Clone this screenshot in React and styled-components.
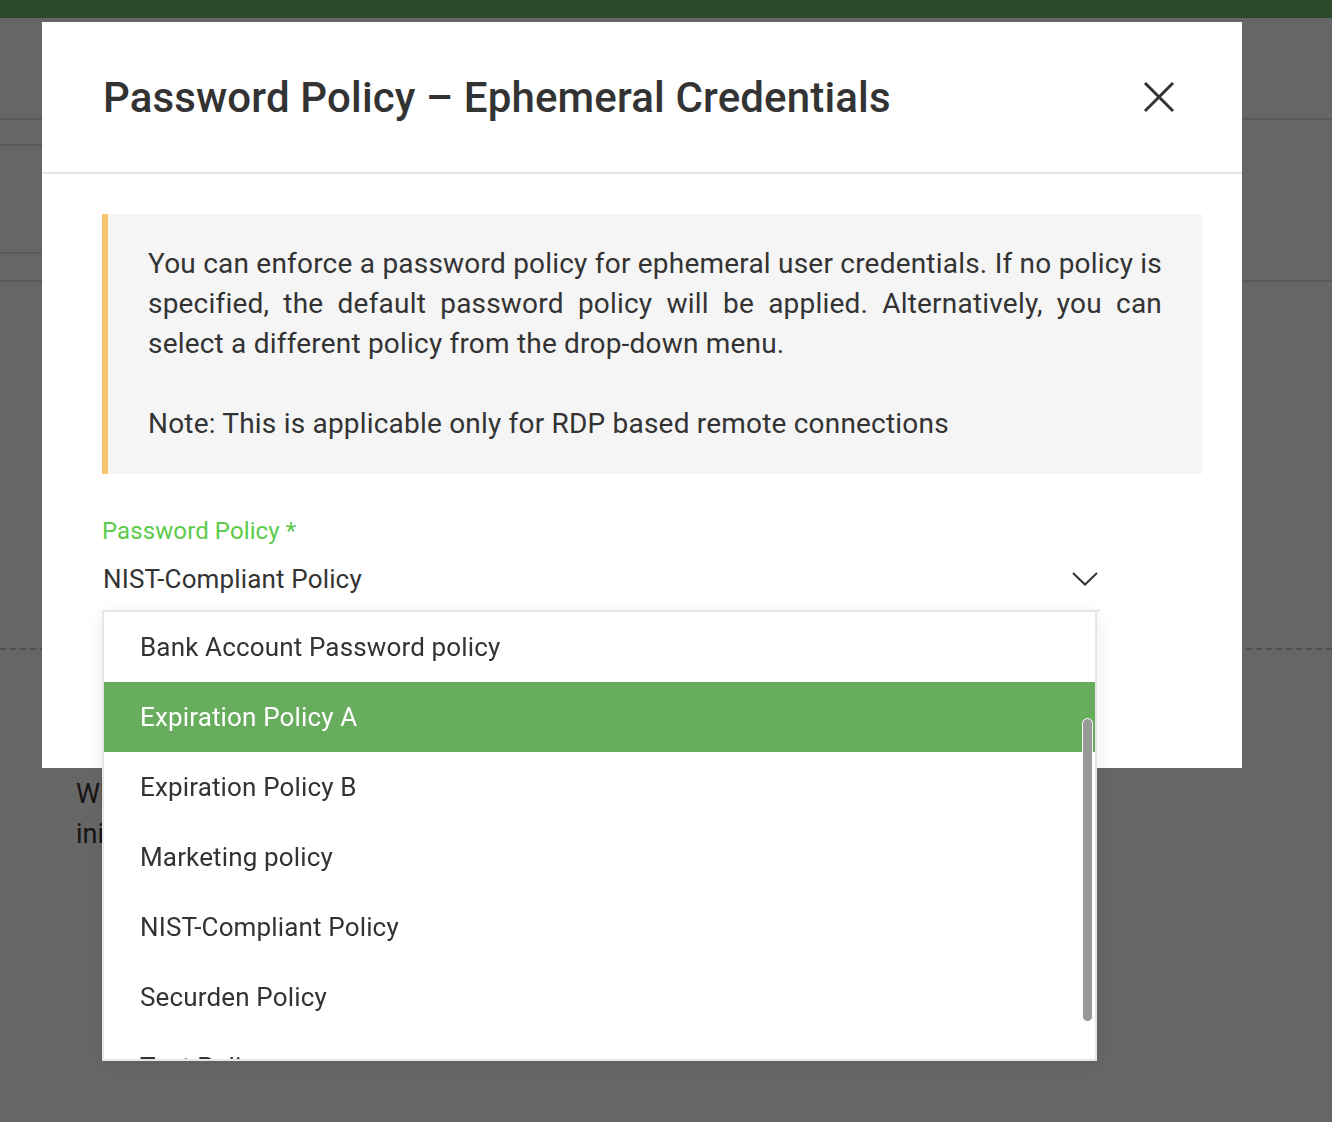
import React from 'react';
import styled, { createGlobalStyle } from 'styled-components';

const GlobalStyle = createGlobalStyle`
  html, body {
    margin: 0;
    padding: 0;
  }
  body {
    font-family: Roboto, "Liberation Sans", Arial, sans-serif;
    color: #333;
  }
`;

const Page = styled.div`
  position: relative;
  height: 1122px;
  background: #ffffff;
  overflow: hidden;
`;

const TopBar = styled.div`
  height: 18px;
  background: #6db96c;
`;

const Toolbar = styled.div`
  height: 100px;
  border-bottom: 2px solid #e2e2e2;
`;

const Section = styled.div`
  height: 160px;
  border-bottom: 2px solid #e2e2e2;
  display: flex;
`;

const SideBlock = styled.div`
  width: 60px;
  margin-top: 24px;
  height: 106px;
  border-top: 2px solid #e2e2e2;
  border-bottom: 2px solid #e2e2e2;
`;

const DashedRule = styled.div`
  margin-top: 366px;
  border-top: 2px dashed #c8c8c8;
`;

const BackText = styled.p`
  margin: 124px 0 0 76px;
  font-size: 27px;
  line-height: 40px;
  color: #333;
`;

const Overlay = styled.div`
  position: fixed;
  inset: 0;
  background: rgba(0, 0, 0, 0.6);
  display: flex;
  align-items: flex-start;
  padding: 22px 0 0 42px;
`;

const Modal = styled.div`
  width: 1200px;
  height: 746px;
  background: #ffffff;
  display: flex;
  flex-direction: column;
`;

const Header = styled.div`
  height: 152px;
  border-bottom: 2px solid #e4e4e4;
  display: flex;
  align-items: center;
  justify-content: space-between;
  padding: 0 66px 0 61px;
  box-sizing: border-box;
`;

const Title = styled.h2`
  margin: 0;
  font-size: 42px;
  font-weight: 500;
  color: #333;
  letter-spacing: 0.15px;
`;

const CloseButton = styled.button`
  border: none;
  background: none;
  padding: 0;
  width: 34px;
  height: 34px;
  display: flex;
  align-items: center;
  justify-content: center;
  cursor: pointer;
`;

const Body = styled.div`
  padding: 40px 40px 0 60px;
`;

const Note = styled.div`
  background: #f5f5f5;
  border-left: 6px solid #f6c46a;
  padding: 30px 40px;
  font-size: 28px;
  line-height: 40px;
  letter-spacing: 0.2px;
  color: #333;
  text-align: justify;
`;

const NoteLine = styled.p`
  margin: 0;
  & + & {
    margin-top: 40px;
  }
`;

const Field = styled.div`
  position: relative;
  margin-top: 43px;
  width: 998px;
`;

const Label = styled.div`
  font-size: 24px;
  line-height: 28px;
  letter-spacing: 0.1px;
  color: #5ccb4b;
`;

const SelectRow = styled.div`
  display: flex;
  align-items: center;
  justify-content: space-between;
  margin-top: 4px;
  height: 62px;
  padding: 0 2px 2px 1px;
  box-sizing: border-box;
  border-bottom: 1px solid #e0e0e0;
  font-size: 26px;
  letter-spacing: 0.15px;
  color: #333;
`;

const Menu = styled.div`
  position: absolute;
  top: 93px;
  left: 0;
  width: 995px;
  height: 451px;
  box-sizing: border-box;
  border: 2px solid #e6e6e6;
  background: #ffffff;
  box-shadow: 0 4px 18px rgba(0, 0, 0, 0.08);
  overflow: hidden;
`;

const Option = styled.div`
  height: 70px;
  display: flex;
  align-items: center;
  padding-left: 36px;
  font-size: 26px;
  letter-spacing: 0.15px;
  color: ${p => (p.$active ? '#ffffff' : '#333')};
  background: ${p => (p.$active ? '#68ad5d' : 'transparent')};
`;

const Thumb = styled.div`
  position: absolute;
  top: 106px;
  right: 2px;
  width: 11px;
  height: 304px;
  box-sizing: border-box;
  background: #999;
  border: 1px solid #ffffff;
  border-radius: 6px;
`;

const options = [
  'Bank Account Password policy',
  'Expiration Policy A',
  'Expiration Policy B',
  'Marketing policy',
  'NIST-Compliant Policy',
  'Securden Policy',
  'Test Policy',
];

export default function App() {
  return (
    <>
      <GlobalStyle />
      <Page>
        <TopBar />
        <Toolbar />
        <Section>
          <SideBlock />
        </Section>
        <DashedRule />
        <BackText>
          When enabled, a new account is
          <br />
          initialized for each session.
        </BackText>
      </Page>
      <Overlay>
        <Modal>
          <Header>
            <Title>Password Policy – Ephemeral Credentials</Title>
            <CloseButton aria-label="Close">
              <svg width="32" height="32" viewBox="0 0 32 32">
                <path d="M2 2 L30 30 M30 2 L2 30" stroke="#333" strokeWidth="3" fill="none" />
              </svg>
            </CloseButton>
          </Header>
          <Body>
            <Note>
              <NoteLine>
                You can enforce a password policy for ephemeral user credentials. If no policy is specified, the default password policy will be applied. Alternatively, you can select a different policy from the drop-down menu.
              </NoteLine>
              <NoteLine>Note: This is applicable only for RDP based remote connections</NoteLine>
            </Note>
            <Field>
              <Label>Password Policy *</Label>
              <SelectRow>
                <span>NIST-Compliant Policy</span>
                <svg width="26" height="14" viewBox="0 0 26 14">
                  <path d="M1 1 L13 12.5 L25 1" stroke="#333" strokeWidth="2" fill="none" />
                </svg>
              </SelectRow>
              <Menu>
                {options.map(o => (
                  <Option key={o} $active={o === 'Expiration Policy A'}>
                    {o}
                  </Option>
                ))}
                <Thumb />
              </Menu>
            </Field>
          </Body>
        </Modal>
      </Overlay>
    </>
  );
}
